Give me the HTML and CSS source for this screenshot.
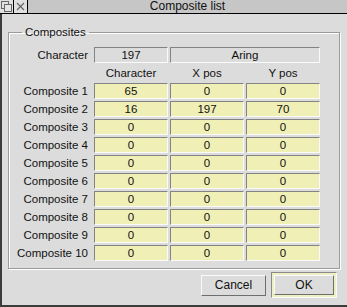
FILE: index.html
```html
<!DOCTYPE html>
<html>
<head>
  <title>Composite list</title>
  <link rel="stylesheet" href="styles.css">
</head>
<body>
  <div class="window">
    <div class="titlebar">
      <div class="tool">
        <svg width="13" height="13" viewBox="0 0 13 13">
          <rect x="1.5" y="1.5" width="7" height="7" fill="none" stroke="#666"/>
          <rect x="4.5" y="4.5" width="7" height="7" fill="#e4e4e4" stroke="#666"/>
        </svg>
      </div>
      <div class="tool">
        <svg width="13" height="13" viewBox="0 0 13 13">
          <path d="M3 3 L10 10 M10 3 L3 10" stroke="#666" stroke-width="1.2"/>
        </svg>
      </div>
      <div class="title">Composite list</div>
    </div>

    <div class="work">
      <fieldset class="group">
        <legend>Composites</legend>
        <div class="grid">
          <div class="label">Character</div>
          <div class="box">197</div>
          <div class="box wide">Aring</div>

          <div></div>
          <div class="head">Character</div>
          <div class="head">X pos</div>
          <div class="head">Y pos</div>

          <div class="label">Composite 1</div>
          <div class="cell">65</div><div class="cell">0</div><div class="cell">0</div>
          <div class="label">Composite 2</div>
          <div class="cell">16</div><div class="cell">197</div><div class="cell">70</div>
          <div class="label">Composite 3</div>
          <div class="cell">0</div><div class="cell">0</div><div class="cell">0</div>
          <div class="label">Composite 4</div>
          <div class="cell">0</div><div class="cell">0</div><div class="cell">0</div>
          <div class="label">Composite 5</div>
          <div class="cell">0</div><div class="cell">0</div><div class="cell">0</div>
          <div class="label">Composite 6</div>
          <div class="cell">0</div><div class="cell">0</div><div class="cell">0</div>
          <div class="label">Composite 7</div>
          <div class="cell">0</div><div class="cell">0</div><div class="cell">0</div>
          <div class="label">Composite 8</div>
          <div class="cell">0</div><div class="cell">0</div><div class="cell">0</div>
          <div class="label">Composite 9</div>
          <div class="cell">0</div><div class="cell">0</div><div class="cell">0</div>
          <div class="label">Composite 10</div>
          <div class="cell">0</div><div class="cell">0</div><div class="cell">0</div>
        </div>
      </fieldset>

      <div class="buttons">
        <button class="btn">Cancel</button>
        <div class="default">
          <button class="btn">OK</button>
        </div>
      </div>
    </div>
  </div>
</body>
</html>
```

FILE: styles.css
```css
body {
  margin: 0;
  font-family: "Liberation Sans", Arial, sans-serif;
  font-size: 11.5px;
  color: #111;
  overflow: hidden;
}

.window {
  width: 347px;
  height: 307px;
  background: #dcdcdc;
}

.titlebar {
  display: flex;
  height: 13px;
  border-bottom: 1px solid #000;
  background: #c6c6c6;
}

.tool {
  width: 13px;
  height: 13px;
  border-right: 1px solid #000;
  background: #e0e0e0;
}

.tool svg {
  display: block;
}

.title {
  flex: 1;
  text-align: center;
  font-size: 12px;
  line-height: 13px;
}

.work {
  box-sizing: border-box;
  height: 293px;
  border-left: 2px solid #3c3c3c;
  border-bottom: 2px solid #3c3c3c;
  padding: 12px 0 0 6px;
}

.group {
  width: 330px;
  margin: 0;
  padding: 8px 0 7px 0;
  border: 1px solid #9a9a9a;
  box-shadow: inset 1px 1px 0 #fff, 1px 1px 0 #fff;
}

.group legend {
  margin-left: 13px;
  padding: 0 3px;
  line-height: 13px;
}

.grid {
  display: grid;
  grid-template-columns: 83px 74px 74px 74px;
  grid-auto-rows: 16px;
  column-gap: 2px;
  row-gap: 2px;
}

.label {
  text-align: right;
  padding-right: 4px;
  line-height: 16px;
}

.head {
  text-align: center;
  line-height: 16px;
}

.box,
.cell {
  box-sizing: border-box;
  text-align: center;
  line-height: 14px;
  border-top: 1px solid #838383;
  border-left: 1px solid #838383;
  border-bottom: 1px solid #fafafa;
  border-right: 1px solid #fafafa;
}

.box {
  background: #dcdcdc;
}

.wide {
  grid-column: span 2;
}

.cell {
  background: #efefb6;
}

.buttons {
  display: flex;
  justify-content: flex-end;
  align-items: center;
  gap: 5px;
  margin-top: 3px;
  padding-right: 10px;
}

.btn {
  box-sizing: border-box;
  width: 65px;
  height: 21px;
  margin: 0;
  padding: 0;
  font-family: inherit;
  font-size: 12px;
  color: #111;
  background: #dcdcdc;
  border-top: 1px solid #fafafa;
  border-left: 1px solid #fafafa;
  border-bottom: 1px solid #6e6e6e;
  border-right: 1px solid #6e6e6e;
  border-radius: 0;
}

.default {
  box-sizing: border-box;
  width: 66px;
  height: 26px;
  padding: 2px;
  background: #efefc4;
  border-top: 1px solid #8a8a8a;
  border-left: 1px solid #8a8a8a;
  border-bottom: 1px solid #fafafa;
  border-right: 1px solid #fafafa;
}

.default .btn {
  width: 60px;
  height: 20px;
  display: block;
}
```
